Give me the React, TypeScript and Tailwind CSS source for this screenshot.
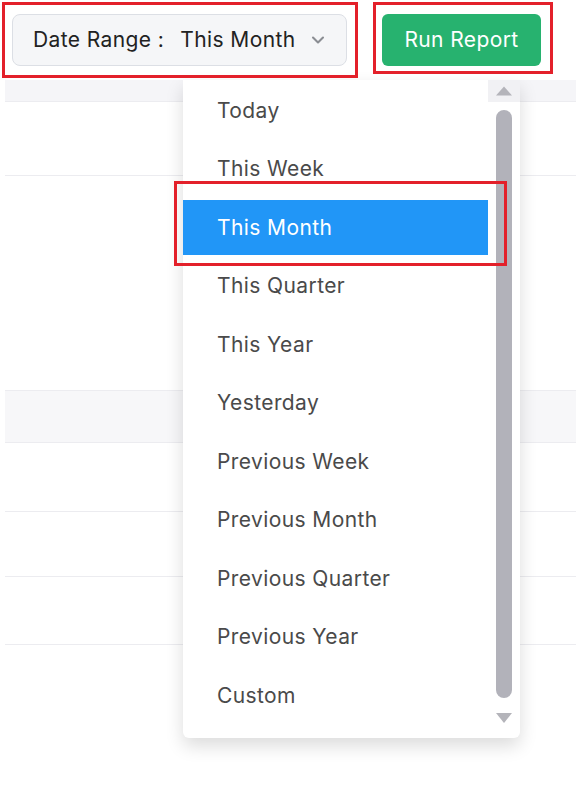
import { ChevronDown } from "lucide-react";

const options = [
  "Today",
  "This Week",
  "This Month",
  "This Quarter",
  "This Year",
  "Yesterday",
  "Previous Week",
  "Previous Month",
  "Previous Quarter",
  "Previous Year",
  "Custom",
];

const App = () => {
  const selected = "This Month";

  return (
    <div
      className="relative w-[576px] h-[796px] overflow-hidden bg-white tracking-[0.4px]"
      style={{ fontFamily: "Inter, 'Noto Sans', sans-serif" }}
    >
      {/* toolbar */}
      <div className="flex items-start gap-[35px] pl-[12px] pt-[14px] h-[80px]">
        <button className="flex items-center w-[335px] h-[52px] rounded-lg border border-[#dcdfe5] bg-[#f5f6f8] pl-[20px] text-[21px] text-[#222]">
          <span>Date Range :</span>
          <span className="ml-[16px]">{selected}</span>
          <ChevronDown className="ml-[12px] text-[#8a8d93]" size={20} strokeWidth={2.5} />
        </button>
        <button className="w-[159px] h-[52px] rounded-md bg-[#27b26f] text-white text-[21px]">
          Run Report
        </button>
      </div>

      {/* table behind */}
      <div className="ml-[5px] flex flex-col">
        <div className="h-[22px] bg-[#f5f5f8] border-b border-[#ececf0]" />
        <div className="h-[74px] border-b border-[#ececf0]" />
        <div className="h-[214px]" />
        <div className="h-[53px] bg-[#f7f7f9] border-y border-[#ececf0]" />
        <div className="h-[69px] border-b border-[#ececf0]" />
        <div className="h-[65px] border-b border-[#ececf0]" />
        <div className="h-[68px] border-b border-[#ececf0]" />
      </div>

      {/* dropdown */}
      <div className="absolute left-[183px] top-[80px] w-[337px] h-[658px] flex bg-white rounded-b-md shadow-[0_8px_18px_rgba(0,0,0,0.14)]">
        <div className="flex-1 flex flex-col pt-[1px]">
          {options.map((o) => (
            <div key={o} className="h-[58.5px] flex items-center">
              <div
                className={
                  o === selected
                    ? "w-full h-[55px] flex items-center pl-[34px] bg-[#2196f7] text-white text-[21px]"
                    : "w-full h-[55px] flex items-center pl-[34px] text-[#4a4a4a] text-[21px]"
                }
              >
                {o}
              </div>
            </div>
          ))}
        </div>
        <div className="w-[32px] flex flex-col items-center pb-[8px]">
          <div className="w-full h-[22px] bg-[#f1f1f4] flex items-center justify-center">
            <svg width="18" height="10" viewBox="0 0 18 10">
              <path d="M9 0.5 L17 9.5 L1 9.5 Z" fill="#b4b4ba" />
            </svg>
          </div>
          <div className="w-[16px] h-[588px] mt-[8px] rounded-full bg-[#b2b2ba]" />
          <div className="mt-[14px]">
            <svg width="18" height="12" viewBox="0 0 18 12">
              <path d="M1 1 L17 1 L9 11 Z" fill="#b4b4ba" />
            </svg>
          </div>
        </div>
      </div>

      {/* annotations */}
      <div className="absolute left-[2px] top-[2px] w-[356px] h-[76px] border-[3px] border-[#e3202a]" />
      <div className="absolute left-[373px] top-[2px] w-[180px] h-[72px] border-[3px] border-[#e3202a]" />
      <div className="absolute left-[174px] top-[181px] w-[333px] h-[85px] border-[3px] border-[#e3202a]" />
    </div>
  );
};

export default App;
